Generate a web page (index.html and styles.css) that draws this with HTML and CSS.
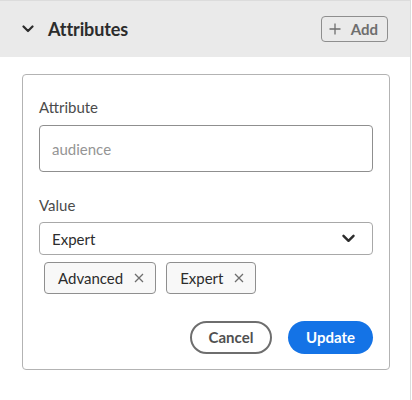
FILE: index.html
```html
<!DOCTYPE html>
<html>
<head>
<meta charset="utf-8">
<link rel="stylesheet" href="styles.css">
</head>
<body>
<div class="panel">
  <div class="header">
    <div class="title-wrap">
      <svg class="chev" width="12" height="8" viewBox="0 0 12 8"><path d="M1.5 1.5 L6 6 L10.5 1.5" fill="none" stroke="#2c2c2c" stroke-width="2.2" stroke-linecap="round" stroke-linejoin="round"/></svg>
      <span class="title">Attributes</span>
    </div>
    <button class="add-btn"><svg width="12" height="12" viewBox="0 0 12 12"><path d="M6 0.5 V11.5 M0.5 6 H11.5" stroke="#6e6e6e" stroke-width="1.3"/></svg><span>Add</span></button>
  </div>
  <div class="content">
    <div class="card">
      <div class="label">Attribute</div>
      <div class="input"><span class="placeholder">audience</span></div>
      <div class="label label-value">Value</div>
      <div class="select"><span>Expert</span>
        <svg width="13" height="9" viewBox="0 0 13 9"><path d="M1.5 1.8 L6.5 6.8 L11.5 1.8" fill="none" stroke="#2c2c2c" stroke-width="2.4" stroke-linecap="round" stroke-linejoin="round"/></svg>
      </div>
      <div class="tags">
        <div class="tag"><span>Advanced</span><svg width="10" height="10" viewBox="0 0 10 10"><path d="M1 1 L9 9 M9 1 L1 9" stroke="#6e6e6e" stroke-width="1.3"/></svg></div>
        <div class="tag"><span>Expert</span><svg width="10" height="10" viewBox="0 0 10 10"><path d="M1 1 L9 9 M9 1 L1 9" stroke="#6e6e6e" stroke-width="1.3"/></svg></div>
      </div>
      <div class="actions">
        <button class="btn btn-cancel">Cancel</button>
        <button class="btn btn-update">Update</button>
      </div>
    </div>
  </div>
</div>
</body>
</html>
```
FILE: styles.css
```css
html, body {
  margin: 0;
  padding: 0;
  background: #ffffff;
}
body {
  font-family: Lato, "Noto Sans", sans-serif;
  color: #2c2c2c;
}
.panel {
  height: 400px;
  border-top: 1px solid #dcdcdc;
  border-right: 1px solid #dcdcdc;
  box-sizing: border-box;
  width: 411px;
}
.header {
  height: 56px;
  background: #eaeaea;
  display: flex;
  align-items: center;
  justify-content: space-between;
  padding: 0 22px;
}
.title-wrap {
  display: flex;
  align-items: center;
  gap: 14px;
}
.chev { display: block; }
.title {
  font-size: 18px;
  font-weight: 700;
  color: #2c2c2c;
  letter-spacing: -0.1px;
}
.add-btn {
  height: 26px;
  width: 67px;
  box-sizing: border-box;
  border: 1px solid #8e8e8e;
  border-radius: 4px;
  background: transparent;
  display: flex;
  align-items: center;
  justify-content: center;
  gap: 10px;
  padding: 0 8px 0 6px;
  font-family: inherit;
  font-size: 15px;
  font-weight: 700;
  color: #6e6e6e;
}
.add-btn svg { display: block; }
.content {
  padding: 17px 20px 0 22px;
}
.card {
  border: 1px solid #b3b3b3;
  border-radius: 4px;
  padding: 22px 16px 15px 16px;
}
.label {
  font-size: 15px;
  line-height: 20px;
  color: #4b4b4b;
  margin-bottom: 8px;
}
.label-value {
  margin-top: 23px;
  margin-bottom: 7px;
}
.input {
  height: 47px;
  box-sizing: border-box;
  border: 1px solid #8f8f8f;
  border-radius: 4px;
  display: flex;
  align-items: center;
  padding: 0 12px;
}
.placeholder {
  font-size: 15px;
  color: #959595;
}
.select {
  height: 33px;
  box-sizing: border-box;
  border: 1px solid #a8a8a8;
  border-radius: 4px;
  display: flex;
  align-items: center;
  justify-content: space-between;
  padding: 0 17px 0 12px;
  font-size: 15px;
  color: #2c2c2c;
}
.select svg { display: block; }
.tags {
  display: flex;
  gap: 10px;
  margin-top: 7px;
  padding-left: 5px;
}
.tag {
  height: 32px;
  box-sizing: border-box;
  border: 1px solid #8f8f8f;
  border-radius: 4px;
  background: #f8f8f8;
  display: flex;
  align-items: center;
  gap: 11px;
  padding: 0 11px 0 13px;
  font-size: 15px;
  color: #2c2c2c;
}
.tag svg { display: block; }
.actions {
  display: flex;
  justify-content: flex-end;
  gap: 16px;
  margin-top: 27px;
}
.btn {
  height: 33px;
  border-radius: 17px;
  font-family: inherit;
  font-size: 15px;
  font-weight: 700;
  box-sizing: border-box;
  display: flex;
  align-items: center;
  justify-content: center;
  padding: 0 0 2px 0;
}
.btn-cancel {
  width: 82px;
  border: 2px solid #6e6e6e;
  background: #ffffff;
  color: #505050;
}
.btn-update {
  width: 85px;
  border: none;
  background: #1473e6;
  color: #ffffff;
}
```
